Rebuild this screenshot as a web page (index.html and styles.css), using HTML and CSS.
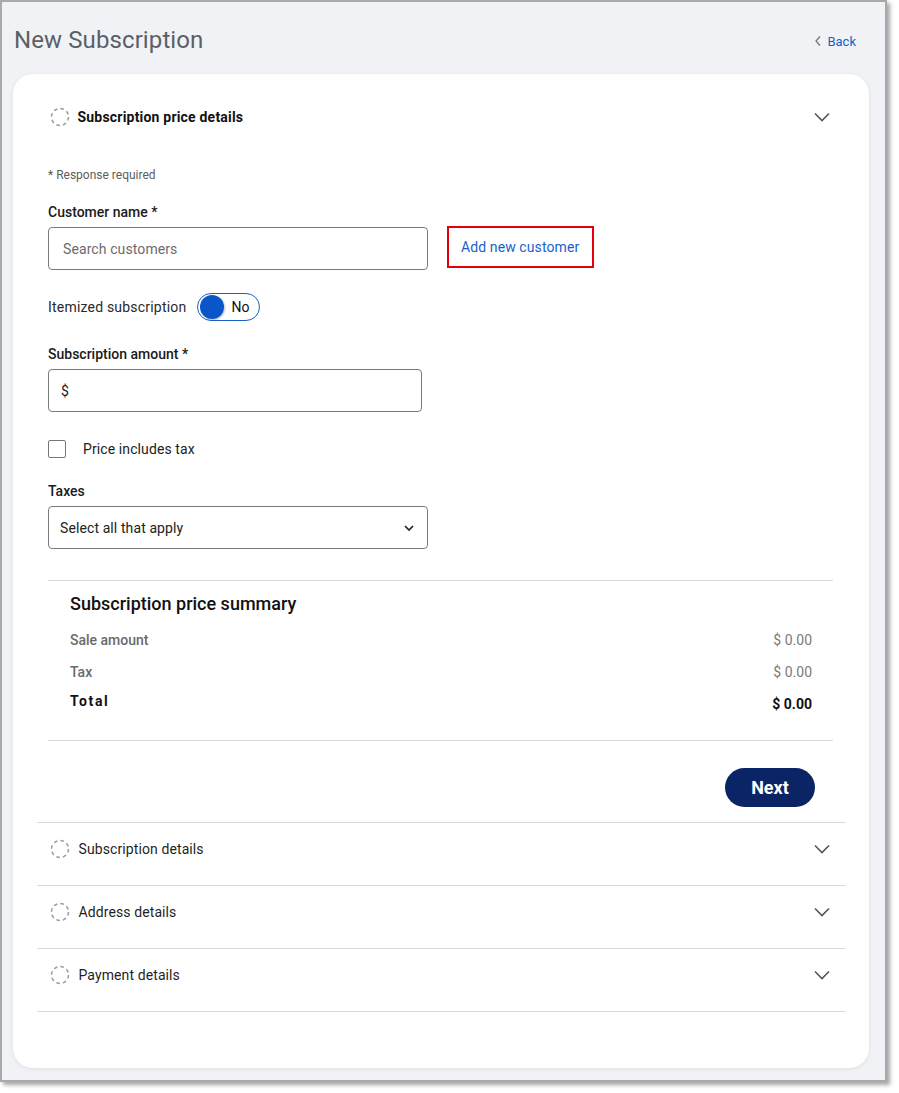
FILE: index.html
```html
<!DOCTYPE html>
<html lang="en">
<head>
<meta charset="utf-8">
<title>New Subscription</title>
<link rel="stylesheet" href="styles.css">
</head>
<body>
<div class="frame">
  <header class="page-head">
    <h1 class="page-title">New Subscription</h1>
    <a class="back-link" href="#">
      <svg class="back-icon" width="8" height="12" viewBox="0 0 8 12"><path d="M6 1.5 L2 6 L6 10.5" fill="none" stroke="#777" stroke-width="1.3"/></svg>
      Back
    </a>
  </header>

  <main class="card">
    <section class="acc acc-open">
      <div class="acc-head">
        <svg class="step-icon" width="20" height="20" viewBox="0 0 20 20"><circle cx="10" cy="10" r="8.5" fill="none" stroke="#9a9a9a" stroke-width="1.5" stroke-dasharray="3.6 3.1"/></svg>
        <span class="acc-title acc-title-bold">Subscription price details</span>
        <svg class="chev" width="16" height="10" viewBox="0 0 16 10"><path d="M1 1.5 L8 8.5 L15 1.5" fill="none" stroke="#555" stroke-width="1.6"/></svg>
      </div>

      <div class="acc-body">
        <p class="req-note">* Response required</p>

        <label class="field-label lbl-customer">Customer name *</label>
        <div class="customer-row">
          <div class="input input-wide"><span class="placeholder">Search customers</span></div>
          <a class="add-link" href="#">Add new customer</a>
        </div>

        <div class="toggle-row">
          <span class="toggle-label">Itemized subscription</span>
          <span class="toggle"><span class="knob"></span><span class="toggle-text">No</span></span>
        </div>

        <label class="field-label lbl-amount">Subscription amount *</label>
        <div class="input input-amount"><span class="dollar">$</span></div>

        <div class="check-row">
          <span class="checkbox"></span>
          <span class="check-label">Price includes tax</span>
        </div>

        <label class="field-label lbl-taxes">Taxes</label>
        <div class="input input-wide select">
          <span class="select-text">Select all that apply</span>
          <svg class="select-chev" width="10" height="6" viewBox="0 0 10 6"><path d="M1 1 L5 5 L9 1" fill="none" stroke="#222" stroke-width="1.7"/></svg>
        </div>

        <div class="summary">
          <h2 class="summary-title">Subscription price summary</h2>
          <div class="sum-row sum-sale"><span class="sum-label">Sale amount</span><span class="sum-val">$ 0.00</span></div>
          <div class="sum-row sum-tax"><span class="sum-label">Tax</span><span class="sum-val">$ 0.00</span></div>
          <div class="sum-row sum-total"><span class="sum-label total-label">Total</span><span class="sum-val total-val">$ 0.00</span></div>
        </div>

        <div class="actions"><button class="next-btn">Next</button></div>
      </div>
    </section>

    <section class="acc">
      <div class="acc-head">
        <svg class="step-icon" width="20" height="20" viewBox="0 0 20 20"><circle cx="10" cy="10" r="8.5" fill="none" stroke="#9a9a9a" stroke-width="1.5" stroke-dasharray="3.6 3.1"/></svg>
        <span class="acc-title">Subscription details</span>
        <svg class="chev" width="16" height="10" viewBox="0 0 16 10"><path d="M1 1.5 L8 8.5 L15 1.5" fill="none" stroke="#555" stroke-width="1.6"/></svg>
      </div>
    </section>
    <section class="acc">
      <div class="acc-head">
        <svg class="step-icon" width="20" height="20" viewBox="0 0 20 20"><circle cx="10" cy="10" r="8.5" fill="none" stroke="#9a9a9a" stroke-width="1.5" stroke-dasharray="3.6 3.1"/></svg>
        <span class="acc-title">Address details</span>
        <svg class="chev" width="16" height="10" viewBox="0 0 16 10"><path d="M1 1.5 L8 8.5 L15 1.5" fill="none" stroke="#555" stroke-width="1.6"/></svg>
      </div>
    </section>
    <section class="acc acc-last">
      <div class="acc-head">
        <svg class="step-icon" width="20" height="20" viewBox="0 0 20 20"><circle cx="10" cy="10" r="8.5" fill="none" stroke="#9a9a9a" stroke-width="1.5" stroke-dasharray="3.6 3.1"/></svg>
        <span class="acc-title">Payment details</span>
        <svg class="chev" width="16" height="10" viewBox="0 0 16 10"><path d="M1 1.5 L8 8.5 L15 1.5" fill="none" stroke="#555" stroke-width="1.6"/></svg>
      </div>
    </section>
  </main>
</div>
</body>
</html>
```

FILE: styles.css
```css
* { box-sizing: border-box; }

html, body {
  margin: 0;
  padding: 0;
  background: #ffffff;
}

body {
  font-family: Roboto, "Liberation Sans", Arial, sans-serif;
  color: #1f1f1f;
  width: 899px;
  height: 1093px;
  overflow: hidden;
}

.frame {
  width: 887px;
  height: 1082px;
  border: 2px solid #a9a9a9;
  background: #f1f2f6;
  box-shadow: 3px 3px 4px rgba(0, 0, 0, 0.35);
  display: flex;
  flex-direction: column;
  padding: 0 29px 0 11px;
}

.page-head {
  height: 72px;
  display: flex;
  align-items: center;
  justify-content: space-between;
  padding-left: 1px;
}

.page-title {
  margin: 0;
  font-size: 24px;
  font-weight: 400;
  color: #5b5f66;
  line-height: 28px;
  letter-spacing: 0.1px;
  position: relative;
  top: 2px;
}

.back-link {
  display: flex;
  align-items: center;
  gap: 5px;
  color: #1a5fc8;
  text-decoration: none;
  font-size: 13px;
  margin-top: 6px;
}

.back-icon { display: block; }

.card {
  width: 856px;
  height: 994px;
  background: #ffffff;
  border-radius: 20px;
  box-shadow: 0 1px 4px rgba(0, 0, 0, 0.08);
  padding: 0 23px 0 24px;
}

.acc { border-bottom: 1px solid #d9d9d9; }

.acc-head {
  display: flex;
  align-items: center;
  height: 20px;
  margin: 16px 0 26px;
  padding: 0 16px 0 13px;
}

.acc-open .acc-head { margin: 33px 0 0; }

.step-icon { display: block; flex: none; width: 20px; height: 20px; margin-left: -0.5px; }

.acc-title {
  margin-left: 9px;
  font-size: 14px;
  line-height: 20px;
  color: #1f1f1f;
  letter-spacing: 0.1px;
  flex: 1;
}

.acc-title-bold { font-weight: 700; color: #111; letter-spacing: 0.2px; margin-left: 8px; }

.chev { display: block; flex: none; }

.acc-body {
  padding: 0 13px 15px 11px;
}

.req-note {
  margin: 40px 0 0;
  font-size: 12px;
  line-height: 16px;
  color: #5c5c5c;
}

.field-label {
  display: block;
  font-size: 14px;
  line-height: 20px;
  font-weight: 500;
  color: #1a1a1a;
}

.lbl-customer { margin-top: 19px; }
.lbl-amount { margin-top: 23px; }
.lbl-taxes { margin-top: 22px; }

.customer-row {
  display: flex;
  align-items: flex-start;
  gap: 19px;
  margin-top: 5px;
}

.input {
  height: 43px;
  border: 1px solid #7a7a7a;
  border-radius: 4px;
  display: flex;
  align-items: center;
  font-size: 14px;
}

.input-wide { width: 380px; }
.input-amount { width: 374px; margin-top: 5px; }

.placeholder {
  padding-left: 14px;
  color: #6b6b6b;
  letter-spacing: 0.1px;
}

.dollar {
  padding-left: 12px;
  color: #222;
}

.add-link {
  display: flex;
  align-items: center;
  height: 42px;
  margin-top: -1px;
  padding: 0 13px 1px 12px;
  border: 2px solid #e5000a;
  color: #1a5fc8;
  text-decoration: none;
  font-size: 14px;
  letter-spacing: 0.1px;
}

.toggle-row {
  display: flex;
  align-items: center;
  margin-top: 23px;
  height: 28px;
}

.toggle-label {
  font-size: 14px;
  color: #2a2a2a;
  margin-right: 11px;
  letter-spacing: 0.2px;
}

.toggle {
  width: 63px;
  height: 28px;
  border: 1px solid #1a5fc8;
  border-radius: 14px;
  display: flex;
  align-items: center;
  padding-left: 2px;
}

.knob {
  width: 24px;
  height: 24px;
  border-radius: 50%;
  background: #0a55c9;
  box-shadow: 1px 1px 2px rgba(0, 0, 0, 0.25);
}

.toggle-text {
  margin-left: 7px;
  font-size: 14px;
  color: #111;
}

.check-row {
  display: flex;
  align-items: center;
  margin-top: 27px;
  height: 20px;
}

.checkbox {
  width: 18px;
  height: 18px;
  border: 1px solid #777;
  border-radius: 2px;
  margin-right: 17px;
}

.check-label {
  font-size: 14px;
  color: #222;
  letter-spacing: 0.1px;
}

.select {
  margin-top: 5px;
  height: 43px;
  justify-content: space-between;
  padding: 0 13px 0 11px;
}

.select-text { color: #222; letter-spacing: 0.1px; }
.select-chev { display: block; }

.summary {
  margin-top: 31px;
  border-top: 1px solid #d9d9d9;
  border-bottom: 1px solid #d9d9d9;
  padding: 11px 21px 29px 22px;
}

.summary-title {
  margin: 0;
  font-size: 18px;
  line-height: 24px;
  font-weight: 500;
  color: #111;
}

.sum-row {
  display: flex;
  justify-content: space-between;
  align-items: center;
  height: 20px;
  font-size: 14px;
}

.sum-sale { margin-top: 14px; }
.sum-tax { margin-top: 12px; }
.sum-total { margin-top: 9px; }

.sum-label {
  font-weight: 500;
  color: #6a6a6a;
}

.sum-val { color: #7a7a7a; }

.total-label {
  color: #111;
  font-weight: 700;
  letter-spacing: 1.6px;
}

.total-val {
  color: #111;
  font-weight: 700;
  position: relative;
  top: 3px;
}

.actions {
  display: flex;
  justify-content: flex-end;
  margin-top: 27px;
  padding-right: 18px;
}

.next-btn {
  width: 90px;
  height: 39px;
  border: none;
  border-radius: 20px;
  background: #0b2466;
  color: #ffffff;
  font-family: Roboto, "Liberation Sans", Arial, sans-serif;
  font-size: 18px;
  font-weight: 700;
  cursor: pointer;
}
```
